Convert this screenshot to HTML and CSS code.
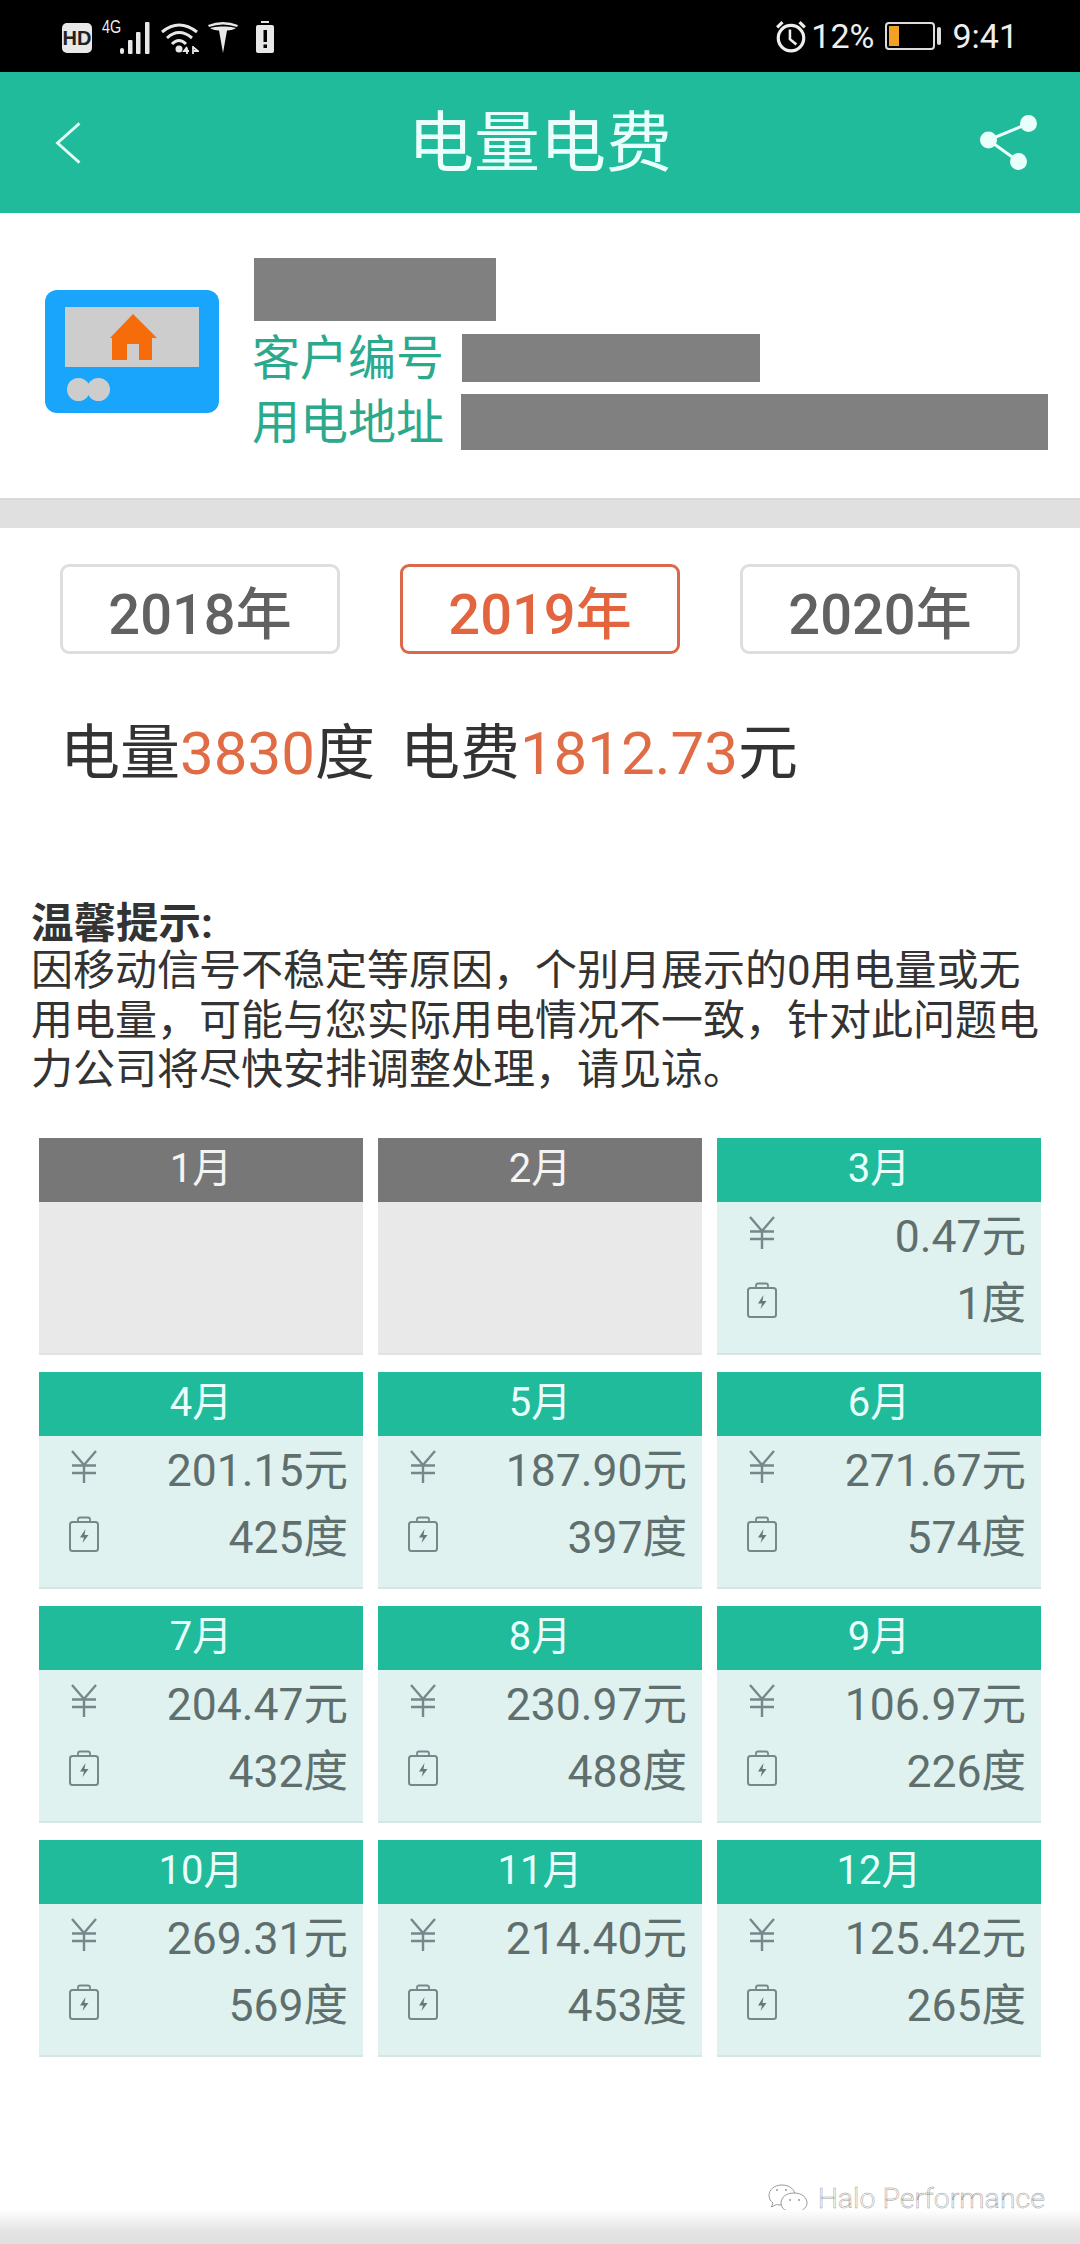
FILE: index.html
```html
<!DOCTYPE html>
<html lang="zh-CN">
<head>
<meta charset="utf-8">
<title>电量电费</title>
<link rel="stylesheet" href="styles.css">
</head>
<body>
<svg class="sprite" aria-hidden="true">
  <symbol id="yen" viewBox="0 0 28 33"><path d="M2 1 14 15 26 1M2 15.500H26M2 23H26M14 15V33" fill="none" stroke="#76888a" stroke-width="2.400"/></symbol>
  <symbol id="bat" viewBox="0 0 30 36"><path d="M9 6V3.500Q9 1.500 11 1.500H19Q21 1.500 21 3.500V6" fill="none" stroke="#76888a" stroke-width="1.800"/><rect x="1" y="6" width="28" height="29" rx="2.500" fill="none" stroke="#76888a" stroke-width="2"/><path d="M16.500 13 11 21.500H15L13.500 27 19.500 19H15.500Z" fill="#64777a"/></symbol>
</svg>
<div class="status">
  <div class="status-left">
    <svg class="i-hd" viewBox="0 0 30 30"><rect width="30" height="30" rx="5" fill="#e8e8e8"/><text x="15" y="22" class="hd-text">HD</text></svg>
    <span class="net">4G</span>
    <svg class="i-signal" viewBox="0 0 32 32"><g fill="#e8e8e8"><rect x="0" y="26" width="4" height="6" rx="2"/><rect x="8" y="18" width="4.500" height="14" rx="1"/><rect x="16" y="10" width="4.500" height="22" rx="1"/><rect x="25" y="0" width="4.500" height="32" rx="1"/></g></svg>
    <svg class="i-wifi" viewBox="0 0 38 32"><g fill="none" stroke="#e8e8e8" stroke-width="3"><path d="M1 10Q18-4 36 10"/><path d="M6 16Q18 5 31 16"/><path d="M11 22Q18 15 25 22"/></g><circle cx="18" cy="27" r="3.500" fill="#e8e8e8"/><path d="M26 32V26M32 32V24M28 29 23 29 26 25M32 25 37 29H33" fill="none" stroke="#e8e8e8" stroke-width="1.800"/></svg>
    <svg class="i-tesla" viewBox="0 0 30 32"><path d="M0 4Q15-2 30 4L29 6Q15 1 1 6Z" fill="#e8e8e8"/><path d="M2 7Q8 5 15 5.500 22 5 28 7 25 9 19 9.500L15 32 11 9.500Q5 9 2 7Z" fill="#e8e8e8"/></svg>
    <svg class="i-alert" viewBox="0 0 18 32"><rect x="5" y="0" width="8" height="2" fill="#e8e8e8"/><rect y="4" width="18" height="28" rx="2" fill="#e8e8e8"/><rect x="7.500" y="9" width="3.500" height="12" fill="#000"/><rect x="7.500" y="23.500" width="3.500" height="3.500" fill="#000"/></svg>
  </div>
  <div class="status-right">
    <svg class="i-clock" viewBox="0 0 30 32"><circle cx="15" cy="17" r="12" fill="none" stroke="#eee" stroke-width="3"/><path d="M14 9V18L20 23" fill="none" stroke="#eee" stroke-width="2.400"/><path d="M2 7 7 2M23 2 28 7" stroke="#eee" stroke-width="3"/></svg>
    <span class="pct">12%</span>
    <div class="battery"><div class="battery-fill"></div></div>
    <div class="battery-nub"></div>
    <span class="time">9:41</span>
  </div>
</div>
<header class="appbar">
  <svg class="i-back" viewBox="0 0 26 44"><path d="M25 1.500 2 22 25 42.500" fill="none" stroke="#dffcf6" stroke-width="3"/></svg>
  <h1 class="title">电量电费</h1>
  <svg class="i-share" viewBox="0 0 57 55"><g fill="#e9fffb"><circle cx="8.500" cy="25" r="8.500"/><circle cx="48.500" cy="8.500" r="8.500"/><circle cx="38.500" cy="46.500" r="8.500"/></g><path d="M8.500 25 48.500 8.500M8.500 25 38.500 46.500" stroke="#e9fffb" stroke-width="3"/></svg>
</header>
<section class="info">
  <svg class="meter" viewBox="0 0 174 123"><rect width="174" height="123" rx="12" fill="#18a5fb"/><rect x="20" y="17" width="134" height="60" fill="#cdcdcd"/><path d="M65 48 88 24 112 48H107V70H94V54H82V70H67V48Z" fill="#f76c0a"/><circle cx="33.500" cy="99.500" r="11.500" fill="#cdcdcd"/><circle cx="53.500" cy="99.500" r="11.500" fill="#cdcdcd"/></svg>
  <div class="info-text">
    <div class="mask mask-name"></div>
    <div class="info-row row-no"><span class="label">客户编号</span><div class="mask mask-no"></div></div>
    <div class="info-row row-addr"><span class="label">用电地址</span><div class="mask mask-addr"></div></div>
  </div>
</section>
<div class="band"></div>
<nav class="years">
  <div class="year">2018年</div>
  <div class="year active">2019年</div>
  <div class="year">2020年</div>
</nav>
<p class="summary">电量<em>3830</em>度<span class="sep"></span>电费<em>1812.73</em>元</p>
<section class="tips">
  <strong class="tips-head">温馨提示:</strong>
  <p class="tips-body">因移动信号不稳定等原因，个别月展示的0用电量或无<br>用电量，可能与您实际用电情况不一致，针对此问题电<br>力公司将尽快安排调整处理，请见谅。</p>
</section>
<section class="grid">
  <article class="card off"><h2 class="month">1月</h2></article>
  <article class="card off"><h2 class="month">2月</h2></article>
  <article class="card"><h2 class="month">3月</h2><div class="line"><svg class="i-yen"><use href="#yen"/></svg><span>0.47元</span></div><div class="line"><svg class="i-bat"><use href="#bat"/></svg><span>1度</span></div></article>
  <article class="card"><h2 class="month">4月</h2><div class="line"><svg class="i-yen"><use href="#yen"/></svg><span>201.15元</span></div><div class="line"><svg class="i-bat"><use href="#bat"/></svg><span>425度</span></div></article>
  <article class="card"><h2 class="month">5月</h2><div class="line"><svg class="i-yen"><use href="#yen"/></svg><span>187.90元</span></div><div class="line"><svg class="i-bat"><use href="#bat"/></svg><span>397度</span></div></article>
  <article class="card"><h2 class="month">6月</h2><div class="line"><svg class="i-yen"><use href="#yen"/></svg><span>271.67元</span></div><div class="line"><svg class="i-bat"><use href="#bat"/></svg><span>574度</span></div></article>
  <article class="card"><h2 class="month">7月</h2><div class="line"><svg class="i-yen"><use href="#yen"/></svg><span>204.47元</span></div><div class="line"><svg class="i-bat"><use href="#bat"/></svg><span>432度</span></div></article>
  <article class="card"><h2 class="month">8月</h2><div class="line"><svg class="i-yen"><use href="#yen"/></svg><span>230.97元</span></div><div class="line"><svg class="i-bat"><use href="#bat"/></svg><span>488度</span></div></article>
  <article class="card"><h2 class="month">9月</h2><div class="line"><svg class="i-yen"><use href="#yen"/></svg><span>106.97元</span></div><div class="line"><svg class="i-bat"><use href="#bat"/></svg><span>226度</span></div></article>
  <article class="card"><h2 class="month">10月</h2><div class="line"><svg class="i-yen"><use href="#yen"/></svg><span>269.31元</span></div><div class="line"><svg class="i-bat"><use href="#bat"/></svg><span>569度</span></div></article>
  <article class="card"><h2 class="month">11月</h2><div class="line"><svg class="i-yen"><use href="#yen"/></svg><span>214.40元</span></div><div class="line"><svg class="i-bat"><use href="#bat"/></svg><span>453度</span></div></article>
  <article class="card"><h2 class="month">12月</h2><div class="line"><svg class="i-yen"><use href="#yen"/></svg><span>125.42元</span></div><div class="line"><svg class="i-bat"><use href="#bat"/></svg><span>265度</span></div></article>
</section>
<footer class="foot">
  <div class="mark">
    <svg class="i-wechat" viewBox="0 0 40 30"><g fill="#fff" stroke="#9a9a9a" stroke-width="1"><path d="M14 1C6 1 1 6 1 11.500 1 15 3 17.500 5 19L3.500 23 8.500 20.500C10 21 12 21 14 21 22 21 27 16.500 27 11 27 6 22 1 14 1Z"/><path d="M26 9C18 9 13 13.500 13 19 13 24.500 18 28 26 28 28 28 29.500 27.500 31 27L36 29.500 34.500 26C37.500 24 39 21.500 39 19 39 13.500 34 9 26 9Z"/></g><g fill="#999"><circle cx="22" cy="16" r="1"/><circle cx="31" cy="16" r="1"/><circle cx="9" cy="6" r="1"/><circle cx="18" cy="6" r="1"/></g></svg>
    <span class="mark-text">Halo Performance</span>
  </div>
  <div class="fade"></div>
</footer>
</body>
</html>
```
FILE: styles.css
```css
* { box-sizing: border-box; }
html, body { margin: 0; padding: 0; }
body {
  width: 1080px;
  height: 2244px;
  overflow: hidden;
  background: #fff;
  font-family: Roboto, "Noto Sans CJK SC", sans-serif;
  color: #333;
}
.sprite { position: absolute; width: 0; height: 0; }

.status {
  height: 72px;
  background: #000;
  display: flex;
  justify-content: space-between;
  align-items: center;
  padding: 0 62px 0 62px;
  color: #eee;
}
.status-left, .status-right { display: flex; align-items: center; }
.i-hd { width: 30px; height: 30px; margin-top: 4px; }
.hd-text { font: 700 20px "Liberation Sans", sans-serif; text-anchor: middle; fill: #222; }
.net { font: 500 18px "Liberation Sans", Roboto, sans-serif; margin: -18px 0 0 10px; width: 18px; transform: scaleX(.8); transform-origin: left; }
.i-signal { width: 32px; height: 32px; margin: 4px 0 0 0; }
.i-wifi { width: 38px; height: 32px; margin: 4px 0 0 9px; }
.i-tesla { width: 30px; height: 32px; margin: 2px 0 0 9px; }
.i-alert { width: 18px; height: 32px; margin: 2px 0 0 18px; }
.i-clock { width: 32px; height: 34px; margin-top: 1px; }
.pct, .time { font-size: 34px; font-weight: 400; line-height: 40px; }
.pct { margin-left: 4px; }
.battery { width: 50px; height: 28px; margin-left: 11px; border: 2px solid #ddd; border-radius: 4px; padding: 2px; }
.battery-fill { width: 10px; height: 100%; background: #f2a122; }
.battery-nub { width: 4px; height: 18px; margin-left: 2px; background: #ddd; border-radius: 2px; }
.time { margin-left: 11px; }

.appbar {
  height: 141px;
  background: #1fbb9a;
  display: grid;
  grid-template-columns: 1fr auto 1fr;
  align-items: center;
  padding: 0 43px;
}
.i-back { width: 26px; height: 42px; margin-left: 12px; }
.title { margin: 3px 0 0; font-size: 66px; line-height: 80px; font-weight: 400; color: #e9fffb; }
.i-share { width: 57px; height: 55px; justify-self: end; }

.info { height: 285px; display: flex; align-items: flex-start; padding-left: 45px; }
.meter { width: 174px; height: 123px; margin: 77px 35px 0 0; flex: none; }
.info-text { padding-top: 45px; }
.mask { background: #808080; }
.mask-name { width: 242px; height: 63px; }
.info-row { display: flex; align-items: center; }
.row-no { margin-top: 13px; height: 48px; }
.row-addr { margin-top: 12px; height: 56px; }
.label { font-size: 48px; line-height: 58px; color: #2aa98c; width: 209px; margin: 2px 0 0 -2px; flex: none; white-space: nowrap; }
.mask-no { width: 298px; height: 48px; margin-left: 1px; }
.mask-addr { width: 587px; height: 56px; }

.band { height: 30px; background: #e0e0e0; border-top: 2px solid #d8d8d8; }

.years { display: flex; justify-content: space-between; padding: 36px 60px 0; }
.year {
  width: 280px;
  height: 90px;
  border: 3px solid #dedede;
  border-radius: 9px;
  font-size: 56px;
  font-weight: 500;
  color: #616161;
  display: flex;
  align-items: center;
  justify-content: center;
}
.year.active { color: #e2653f; border-color: #d9694a; }

.summary { margin: 67px 0 0; padding-left: 60px; font-size: 60px; line-height: 66px; color: #333; white-space: nowrap; }
.summary em { font-style: normal; color: #e06c45; }
.sep { display: inline-block; width: 25px; }

.tips { margin-top: 112px; padding: 0 31px; color: #333; }
.tips-head { display: block; font-size: 42.500px; line-height: 49px; font-weight: 700; }
.tips-body { margin: -2px 0 0; font-size: 42px; line-height: 49.500px; white-space: nowrap; }

.grid {
  margin-top: 43.500px;
  padding: 0 39px;
  display: grid;
  grid-template-columns: repeat(3, 324px);
  grid-auto-rows: 217px;
  gap: 17px 15px;
}
.card { background: #dff2f0; border-bottom: 2px solid #d7e6e4; }
.card.off { background: #e9e9e9; border-bottom-color: #e2e2e2; }
.month {
  margin: 0;
  height: 64px;
  background: #1fbb9a;
  color: #e9fffb;
  font-size: 40px;
  font-weight: 400;
  line-height: 62px;
  text-align: center;
}
.off .month { background: #777; color: #f4f4f4; }
.line {
  height: 67px;
  display: flex;
  align-items: center;
  justify-content: space-between;
  padding: 0 15px 6px 30px;
  font-size: 44.500px;
  color: #5f6f6e;
}
.i-yen { width: 28px; height: 33px; margin-left: 1px; }
.i-bat { width: 30px; height: 36px; }

.foot { height: 187px; display: flex; flex-direction: column; justify-content: flex-end; }
.mark { display: flex; justify-content: flex-end; align-items: center; padding-right: 35px; margin-bottom: -6px; }
.i-wechat { width: 40px; height: 30px; margin-right: 10px; }
.mark-text { font-size: 28.500px; font-weight: 300; color: #fff; -webkit-text-stroke: .5px #999; line-height: 34px; }
.fade { height: 34px; background: linear-gradient(#fff, #e4e4e4 62%, #e0e0e0); }
```
